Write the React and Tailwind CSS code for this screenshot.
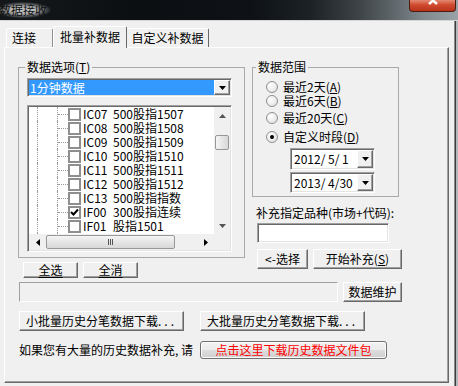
import React from "react";

// classic win32 look: raised buttons, sunken fields
const raised =
  "bg-[#f0f0f0] border border-t-white border-l-white border-r-[#696969] border-b-[#696969] shadow-[inset_-1px_-1px_0_#a0a0a0]";
const sunken =
  "border border-t-[#a0a0a0] border-l-[#a0a0a0] border-r-white border-b-white shadow-[inset_1px_1px_0_#696969,inset_-1px_-1px_0_#e3e3e3]";

const treeRows = [
  { code: "IC07", name: "500股指1507" },
  { code: "IC08", name: "500股指1508" },
  { code: "IC09", name: "500股指1509" },
  { code: "IC10", name: "500股指1510" },
  { code: "IC11", name: "500股指1511" },
  { code: "IC12", name: "500股指1512" },
  { code: "IC13", name: "500股指指数" },
  { code: "IF00", name: "300股指连续", checked: true },
  { code: "IF01", name: "股指1501" },
  { code: "IF02", name: "股指1502" },
];

const DownArrow = () => (
  <svg width="7" height="4" viewBox="0 0 7 4">
    <polygon points="0,0 7,0 3.5,4" fill="#000" />
  </svg>
);

const DropButton = () => (
  <div className={`flex w-[16px] items-center justify-center ${raised}`}>
    <DownArrow />
  </div>
);

const Checkbox = ({ checked }) => (
  <div className="flex h-[13px] w-[13px] items-center justify-center border-2 border-[#8e8e8e] bg-white">
    {checked && (
      <svg width="9" height="9" viewBox="0 0 9 9">
        <polyline points="1,4 3.5,6.5 8,1.5" fill="none" stroke="#000" strokeWidth="2" />
      </svg>
    )}
  </div>
);

const TreeRow = ({ code, name, checked }) => (
  <div className="flex h-[14px] shrink-0 items-center whitespace-nowrap">
    <div className="ml-[8px] h-full border-l border-dotted border-[#9a9a9a]" />
    <div className="ml-[19px] h-full border-l border-dotted border-[#9a9a9a]" />
    <div className="w-[10px] border-t border-dotted border-[#9a9a9a]" />
    <Checkbox checked={checked} />
    <span className="ml-[2px] w-[30px]">{code}</span>
    <span>{name}</span>
  </div>
);

const thumb =
  "rounded-[2px] border border-[#979797] bg-[linear-gradient(90deg,#f5f5f5,#e6e6e6_50%,#d8d8d8)]";

const VScroll = () => (
  <div className="flex w-[16px] flex-col bg-[#f0f0f0]">
    <div className="flex h-[17px] items-center justify-center">
      <svg width="7" height="4" viewBox="0 0 7 4">
        <polygon points="0,4 7,4 3.5,0" fill="#555" />
      </svg>
    </div>
    <div className="h-[11px]" />
    <div className={`mx-[1px] h-[15px] ${thumb}`} />
    <div className="flex-1" />
    <div className="flex h-[17px] items-center justify-center">
      <svg width="7" height="4" viewBox="0 0 7 4">
        <polygon points="0,0 7,0 3.5,4" fill="#555" />
      </svg>
    </div>
  </div>
);

const HScroll = () => (
  <div className="flex flex-1 items-stretch bg-[#f0f0f0]">
    <div className="flex w-[17px] items-center justify-center">
      <svg width="4" height="7" viewBox="0 0 4 7">
        <polygon points="4,0 4,7 0,3.5" fill="#000" />
      </svg>
    </div>
    <div className="my-[1px] flex w-[129px] items-center justify-center rounded-[2px] border border-[#979797] bg-[linear-gradient(#f5f5f5,#e6e6e6_50%,#d8d8d8)]">
      <div className="flex gap-[1px]">
        <div className="h-[6px] w-[1px] bg-[#555]" />
        <div className="h-[6px] w-[1px] bg-[#555]" />
        <div className="h-[6px] w-[1px] bg-[#555]" />
      </div>
    </div>
    <div className="flex-1" />
    <div className="flex w-[17px] items-center justify-center">
      <svg width="4" height="7" viewBox="0 0 4 7">
        <polygon points="0,0 0,7 4,3.5" fill="#000" />
      </svg>
    </div>
  </div>
);

const Radio = ({ checked, className, children }) => (
  <div className={`flex h-[14px] items-center ${className}`}>
    <div className="ml-[8px] flex h-[12px] w-[12px] items-center justify-center rounded-full border border-[#8e8f8f] bg-[radial-gradient(circle_at_35%_35%,#ffffff,#dcdcdc)]">
      {checked && <div className="h-[4px] w-[4px] rounded-full bg-black" />}
    </div>
    <span className="ml-[5px]">{children}</span>
  </div>
);

const DateBox = ({ value, className }) => (
  <div className={`ml-[32px] flex w-[85px] bg-white p-[1px] ${sunken} ${className}`}>
    <div className="flex flex-1 items-center whitespace-pre pl-[2px]">{value}</div>
    <DropButton />
  </div>
);

export default function App() {
  return (
    <div className="relative flex h-[386px] w-[458px] flex-col overflow-hidden bg-[#f0f0f0] font-['Noto_Sans_CJK_SC',sans-serif] text-[12px] leading-[14px] text-black">
      {/* title bar */}
      <div className="flex h-[21px] shrink-0 items-start border-b border-[#d5d5d5] bg-[linear-gradient(90deg,#15181b_0%,#0c0f12_30%,#0e1216_55%,#1d2226_68%,#3c4246_78%,#5f676b_86%,#7d878c_92%,#9aa3a8_100%)]">
        <div className="ml-[-5px] mt-[2px] bg-[radial-gradient(ellipse_at_center,rgba(215,215,215,0.85)_30%,rgba(215,215,215,0)_72%)] px-[4px] py-[1px] text-[12px] text-[#111]">
          数据接收
        </div>
        <div className="flex-1" />
        <div className="mr-[2px] flex h-[12px] w-[47px] justify-center overflow-hidden rounded-b-[4px] border border-t-0 border-[#4a1d12] bg-[linear-gradient(#e38a72,#cf4a2e_45%,#b8331a)]">
          <svg className="mt-[-4px]" width="10" height="9" viewBox="0 0 10 9">
            <path d="M1 1 L9 8 M9 1 L1 8" stroke="#fff" strokeWidth="2.4" />
          </svg>
        </div>
      </div>

      <div className="flex flex-1">
        <div className="flex flex-1 flex-col pl-[4px] pr-[5px] pt-[5px]">
          {/* tabs */}
          <div className="flex h-[21px] items-end pl-[2px]">
            <div className="flex h-[19px] w-[47px] items-center rounded-t-[2px] border-l border-t border-r border-white border-r-[#8d8d8d] pl-[5px]">
              连接
            </div>
            <div className="relative z-10 -mb-px flex h-[22px] w-[74px] items-center justify-center rounded-t-[2px] border-l border-t border-r border-white border-r-[#696969] bg-[#f0f0f0] pb-[2px]">
              批量补数据
            </div>
            <div className="flex h-[19px] w-[82px] items-center justify-center rounded-t-[2px] border-t border-r border-white border-r-[#696969]">
              自定义补数据
            </div>
          </div>

          {/* tab panel */}
          <div className="flex h-[336px] flex-col border border-t-white border-l-white border-r-[#696969] border-b-[#696969] shadow-[inset_-1px_-1px_0_#a0a0a0]">
            <div className="mt-[12px] flex">
              {/* left column */}
              <div className="ml-[13px] flex w-[227px] flex-col">
                <fieldset className="h-[198px] min-w-0 border border-[#a9a9a9] px-[8px]">
                  <legend className="ml-[-2px] px-[2px]">
                    数据选项(<u>T</u>)
                  </legend>
                  <div className={`mt-[4px] flex h-[19px] w-[205px] bg-white p-[1px] ${sunken}`}>
                    <div className="flex flex-1 items-center bg-[#3399ff] pl-[1px] text-white">1分钟数据</div>
                    <DropButton />
                  </div>
                  <div className={`mt-[8px] flex h-[147px] w-[205px] flex-col bg-white p-[1px] ${sunken}`}>
                    <div className="flex min-h-0 flex-1">
                      <div className="flex min-w-0 flex-1 flex-col overflow-hidden">
                        {treeRows.map((r) => (
                          <TreeRow key={r.code} {...r} />
                        ))}
                      </div>
                      <VScroll />
                    </div>
                    <div className="flex h-[16px]">
                      <HScroll />
                      <div className="w-[16px] bg-[#f0f0f0]" />
                    </div>
                  </div>
                </fieldset>
                <div className="ml-[5px] mt-[4px] flex gap-[5px]">
                  <button className={`flex h-[16px] w-[55px] items-center justify-center underline underline-offset-2 ${raised}`}>全选</button>
                  <button className={`flex h-[16px] w-[55px] items-center justify-center underline underline-offset-2 ${raised}`}>全消</button>
                </div>
              </div>

              {/* right column */}
              <div className="ml-[7px] flex w-[150px] flex-col">
                <fieldset className="h-[137px] w-[147px] min-w-0 border border-[#a9a9a9] pl-[5px]">
                  <legend className="ml-[-2px] px-[2px]">数据范围</legend>
                  <Radio className="mt-[6px]">
                    最近2天(<u>A</u>)
                  </Radio>
                  <Radio>
                    最近6天(<u>B</u>)
                  </Radio>
                  <Radio className="mt-[3px]">
                    最近20天(<u>C</u>)
                  </Radio>
                  <Radio className="mt-[5px]" checked>
                    自定义时段(<u>D</u>)
                  </Radio>
                  <DateBox className="mt-[4px] h-[22px]" value="2012/ 5/ 1" />
                  <DateBox className="mt-[2px] h-[21px]" value="2013/ 4/30" />
                </fieldset>
                <div className="ml-[4px] mt-[9px] whitespace-nowrap">补充指定品种(市场+代码):</div>
                <div className={`ml-[5px] mt-[3px] h-[20px] w-[132px] bg-white ${sunken}`} />
                <div className="ml-[5px] mt-[6px] flex gap-[5px]">
                  <button className={`flex h-[20px] w-[51px] items-center justify-center ${raised}`}>{"<-选择"}</button>
                  <button className={`flex h-[20px] w-[89px] items-center justify-center ${raised}`}>
                    开始补充(<u>S</u>)
                  </button>
                </div>
              </div>
            </div>

            {/* progress + maintenance */}
            <div className="ml-[14px] mt-[4px] flex gap-[5px]">
              <div className="h-[20px] w-[319px] border border-t-[#a0a0a0] border-l-[#a0a0a0] border-r-white border-b-white" />
              <button className={`flex h-[20px] w-[59px] items-center justify-center ${raised}`}>数据维护</button>
            </div>

            <div className="ml-[14px] mt-[9px] flex gap-[16px]">
              <button className={`flex h-[20px] w-[165px] items-center justify-center ${raised}`}>
                小批量历史分笔数据下载<span className="tracking-[3px]">...</span>
              </button>
              <button className={`flex h-[20px] w-[165px] items-center justify-center ${raised}`}>
                大批量历史分笔数据下载<span className="tracking-[3px]">...</span>
              </button>
            </div>

            <div className="ml-[14px] mt-[10px] flex items-center">
              <span className="w-[181px] whitespace-pre">如果您有大量的历史数据补充, 请</span>
              <button className="flex h-[18px] w-[187px] items-center justify-center rounded-[3px] border border-[#707070] bg-[linear-gradient(#f2f2f2_0%,#ebebeb_50%,#dddddd_51%,#cfcfcf_100%)] text-[#ff0000] shadow-[inset_0_0_0_1px_#fcfcfc]">
                点击这里下载历史数据文件包
              </button>
            </div>
          </div>
        </div>

        {/* window frame, right edge */}
        <div className="flex w-[4px]">
          <div className="w-[1px] bg-[#8a8a8a]" />
          <div className="w-[1px] bg-[#3c3c3c]" />
          <div className="w-[2px] bg-[#b4b8bb]" />
        </div>
      </div>
    </div>
  );
}
